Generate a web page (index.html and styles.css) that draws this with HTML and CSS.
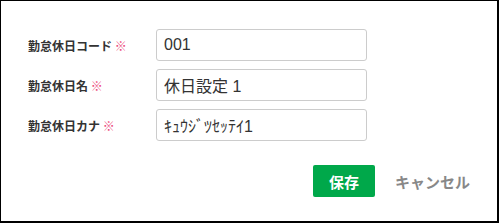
FILE: index.html
```html
<!DOCTYPE html>
<html lang="ja">
<head>
  <meta charset="UTF-8">
  <title>勤怠休日設定</title>
  <link rel="stylesheet" href="styles.css">
</head>
<body>
  <div class="dialog">
    <!-- 入力フォーム -->
    <div class="form">
      <div class="form-row">
        <label class="form-label">勤怠休日コード <span class="req">※</span></label>
        <input class="form-input" type="text" value="001">
      </div>
      <div class="form-row">
        <label class="form-label">勤怠休日名 <span class="req">※</span></label>
        <input class="form-input" type="text" value="休日設定 1">
      </div>
      <div class="form-row">
        <label class="form-label">勤怠休日カナ <span class="req">※</span></label>
        <input class="form-input" type="text" value="ｷｭｳｼﾞﾂｾｯﾃｲ1">
      </div>
    </div>

    <!-- ボタン -->
    <div class="actions">
      <button class="btn-save" type="button">保存</button>
      <button class="btn-cancel" type="button">キャンセル</button>
    </div>
  </div>
</body>
</html>
```

FILE: styles.css
```css
body {
  margin: 0;
  font-family: "Noto Sans CJK JP", sans-serif;
  color: #333;
  background: #fff;
}

.dialog {
  box-sizing: border-box;
  width: 499px;
  height: 223px;
  border: solid #000;
  border-width: 1px 2px 2px 1px;
  padding: 28px 0 0 27px;
}

.form {
  display: flex;
  flex-direction: column;
  gap: 8px;
}

.form-row {
  display: flex;
  align-items: center;
}

.form-label {
  width: 128px;
  font-size: 12px;
  font-weight: 700;
  color: #333;
}

.req {
  color: #ec4579;
  font-weight: 400;
}

.form-input {
  box-sizing: border-box;
  width: 211px;
  height: 32px;
  padding: 0 7px;
  border: 1px solid #ccc;
  border-radius: 3px;
  font-family: "Liberation Sans", "Noto Sans CJK JP", sans-serif;
  font-size: 16px;
  color: #333;
  background: #fff;
}

.actions {
  display: flex;
  justify-content: flex-end;
  align-items: center;
  gap: 20px;
  margin-top: 24px;
  padding-right: 27px;
}

.btn-save {
  width: 62px;
  height: 32px;
  border: none;
  border-radius: 2px;
  background: #00a84a;
  color: #fff;
  font-family: "Noto Sans CJK JP", sans-serif;
  font-size: 15px;
  font-weight: 700;
  cursor: pointer;
}

.btn-cancel {
  padding: 0;
  border: none;
  background: none;
  color: #888;
  font-family: "Noto Sans CJK JP", sans-serif;
  font-size: 15px;
  font-weight: 700;
  cursor: pointer;
}
```
